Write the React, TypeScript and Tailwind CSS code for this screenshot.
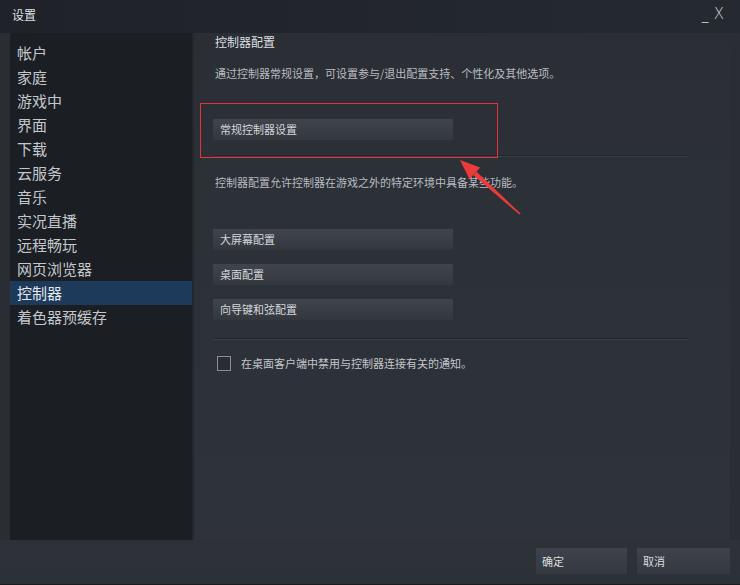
import React from 'react';

const navItems = [
    '帐户',
    '家庭',
    '游戏中',
    '界面',
    '下载',
    '云服务',
    '音乐',
    '实况直播',
    '远程畅玩',
    '网页浏览器',
    '控制器',
    '着色器预缓存',
];

function PanelButton({ label }: { label: string }) {
    return (
        <div className="w-[240px] h-[21px] flex items-center pl-[7px] text-[11px] text-[#d4d7da] bg-gradient-to-b from-[#40444c] to-[#33373e] rounded-[1px]">
            {label}
        </div>
    );
}

function Separator() {
    return <div className="w-[475px] h-[2px] border-t border-[#22252a] border-b border-b-[#3a3e45]" />;
}

export default function App() {
    return (
        <div className="relative w-[740px] h-[585px] flex flex-col bg-[#2a2e34] font-['Noto_Sans_CJK_SC','Microsoft_YaHei',sans-serif] overflow-hidden">
            {/* title bar */}
            <div className="h-[33px] flex items-center justify-between pl-[12px] pr-[16px] bg-gradient-to-r from-[#1f2228] to-[#252a31]">
                <span className="text-[12px] text-[#dfe1e3] -mt-[3px]">设置</span>
                <div className="flex items-end gap-[5px] text-[#d0d3d6] -mt-[4px]">
                    <span className="text-[13px] leading-none">_</span>
                    <span className="text-[15px] leading-none font-['DejaVu_Sans',sans-serif] font-light">X</span>
                </div>
            </div>

            {/* body */}
            <div className="flex-1 flex px-[10px]">
                {/* sidebar */}
                <div className="w-[184px] bg-[#1b1e23] pt-[8px] border-r-2 border-[#24272c]">
                    {navItems.map((item) => (
                        <div
                            key={item}
                            className={`h-[24px] flex items-center pl-[7px] text-[15px] ${item === '控制器' ? 'bg-[#1d3a5b] text-[#e6e9ec]' : 'text-[#c3c8cd]'}`}
                        >
                            {item}
                        </div>
                    ))}
                </div>

                {/* content */}
                <div className="relative flex-1 bg-gradient-to-b from-[#2b2f35] to-[#2e323b] pl-[19px] flex flex-col">
                    <div className="mt-[1px] h-[16px] leading-[16px] text-[12px] text-[#dcdfe2] pl-[2px]">控制器配置</div>
                    <div className="mt-[15px] h-[16px] leading-[16px] text-[11px] text-[#b9bdc2] pl-[2px]">
                        通过控制器常规设置，可设置参与/退出配置支持、个性化及其他选项。
                    </div>

                    <div className="mt-[38px]">
                        <PanelButton label="常规控制器设置" />
                    </div>
                    <div className="mt-[15px]">
                        <Separator />
                    </div>

                    <div className="mt-[17px] h-[16px] leading-[16px] text-[11px] text-[#b9bdc2] pl-[2px]">
                        控制器配置允许控制器在游戏之外的特定环境中具备某些功能。
                    </div>

                    <div className="mt-[39px] flex flex-col gap-[14px]">
                        <PanelButton label="大屏幕配置" />
                        <PanelButton label="桌面配置" />
                        <PanelButton label="向导键和弦配置" />
                    </div>

                    <div className="mt-[18px]">
                        <Separator />
                    </div>

                    <div className="mt-[15px] flex items-center gap-[10px] pl-[4px]">
                        <div className="w-[14px] h-[15px] border border-[#8a8e94] bg-[#2a2e34]" />
                        <span className="text-[11px] text-[#c3c7cb]">在桌面客户端中禁用与控制器连接有关的通知。</span>
                    </div>

                    {/* annotation box */}
                    <div className="absolute left-[6px] top-[70px] w-[298px] h-[55px] border border-[#e8313a]" />
                </div>
            </div>

            {/* footer */}
            <div className="h-[45px] flex items-start justify-end gap-[10px] pr-[10px] pt-[8px] bg-gradient-to-b from-[#2e3238] to-[#2c3038] border-b border-[#1a1c20]">
                <div className="w-[91px] h-[26px] flex items-center pl-[6px] text-[11px] text-[#dadcde] bg-gradient-to-b from-[#3e424a] to-[#343840]">
                    确定
                </div>
                <div className="w-[93px] h-[26px] flex items-center pl-[6px] text-[11px] text-[#dadcde] bg-gradient-to-b from-[#3e424a] to-[#343840]">
                    取消
                </div>
            </div>

            {/* annotation arrow */}
            <svg className="absolute left-[450px] top-[150px]" width="80" height="75" viewBox="0 0 80 75">
                <polygon points="10,10 19.5,29.3 30.2,17.5" fill="#ea3b3b" />
                <polygon points="23.4,25.2 26.4,21.6 70.6,63.6 69.4,64.6" fill="#ea3b3b" />
            </svg>
        </div>
    );
}
